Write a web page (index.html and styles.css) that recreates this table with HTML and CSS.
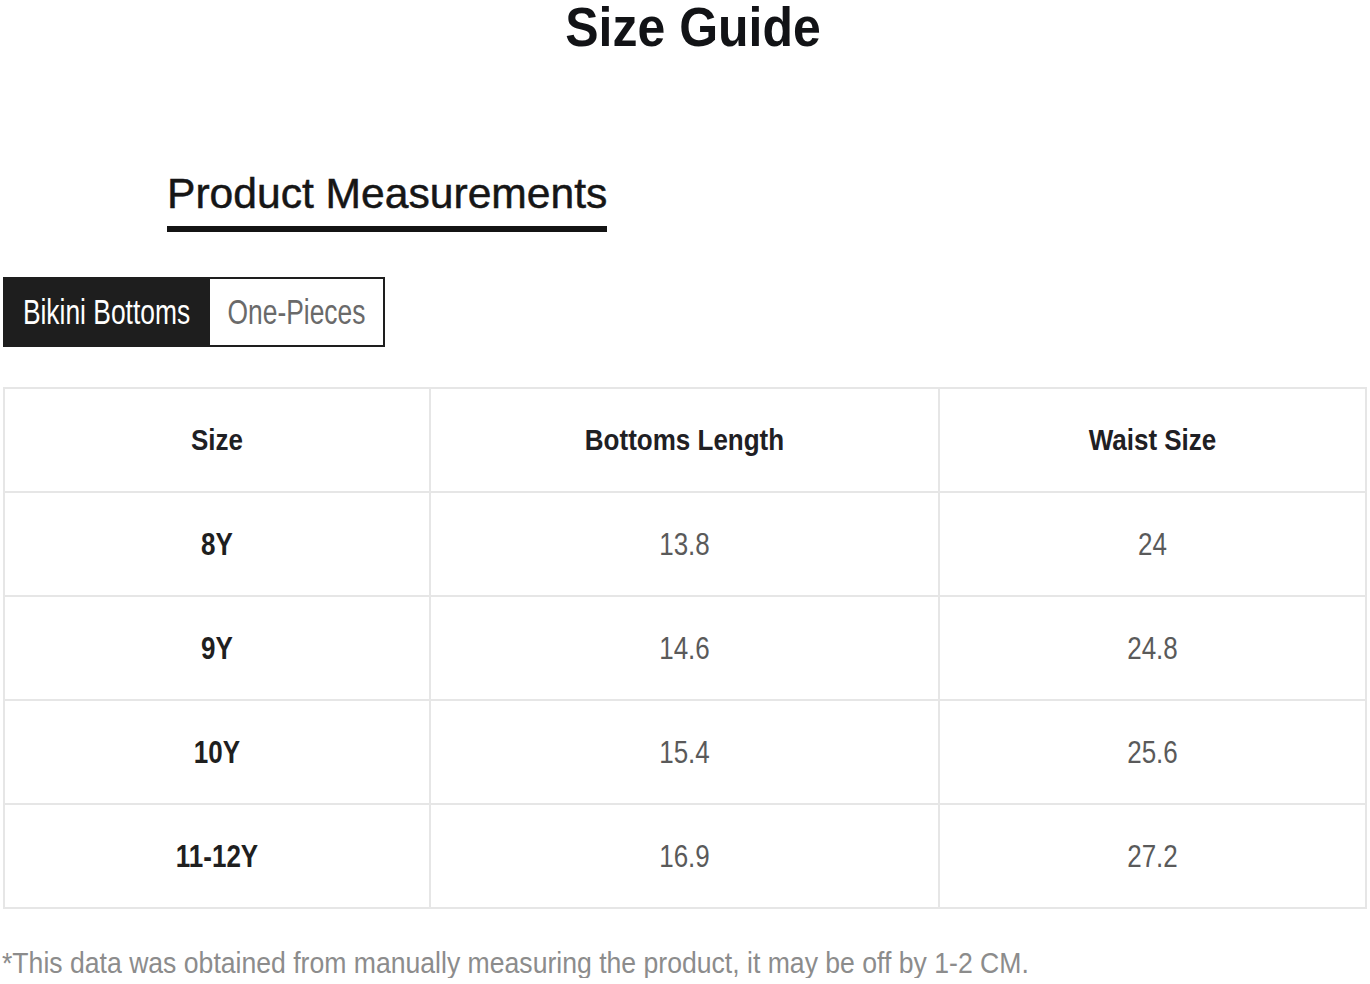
FILE: index.html
```html
<!DOCTYPE html>
<html lang="en">
<head>
<meta charset="utf-8">
<title>Size Guide</title>
<link rel="stylesheet" href="styles.css">
</head>
<body>
<div class="page">
  <h1 class="title"><span class="stretch s-title">Size Guide</span></h1>

  <div class="heading-wrap">
    <h2 class="heading">Product Measurements</h2>
  </div>

  <div class="tabs">
    <div class="tab tab-active"><span class="stretch s-tab">Bikini Bottoms</span></div>
    <div class="tab"><span class="stretch s-tab">One-Pieces</span></div>
  </div>

  <table class="sizes">
    <colgroup>
      <col class="c1">
      <col class="c2">
      <col class="c3">
    </colgroup>
    <thead>
      <tr>
        <th><span class="stretch s-head">Size</span></th>
        <th><span class="stretch s-head">Bottoms Length</span></th>
        <th><span class="stretch s-head">Waist Size</span></th>
      </tr>
    </thead>
    <tbody>
      <tr>
        <td class="size"><span class="stretch s-cell">8Y</span></td>
        <td><span class="stretch s-cell">13.8</span></td>
        <td><span class="stretch s-cell">24</span></td>
      </tr>
      <tr>
        <td class="size"><span class="stretch s-cell">9Y</span></td>
        <td><span class="stretch s-cell">14.6</span></td>
        <td><span class="stretch s-cell">24.8</span></td>
      </tr>
      <tr>
        <td class="size"><span class="stretch s-cell">10Y</span></td>
        <td><span class="stretch s-cell">15.4</span></td>
        <td><span class="stretch s-cell">25.6</span></td>
      </tr>
      <tr>
        <td class="size"><span class="stretch s-cell">11-12Y</span></td>
        <td><span class="stretch s-cell">16.9</span></td>
        <td><span class="stretch s-cell">27.2</span></td>
      </tr>
    </tbody>
  </table>

  <p class="note"><span class="stretch s-note">*This data was obtained from manually measuring the product, it may be off by 1-2 CM.</span></p>
</div>
</body>
</html>
```

FILE: styles.css
```css
html, body {
  margin: 0;
  padding: 0;
  background: #ffffff;
}

body {
  font-family: "Liberation Sans", Arial, sans-serif;
  color: #222222;
}

.page {
  width: 1370px;
  display: flex;
  flex-direction: column;
}

.stretch {
  display: inline-block;
  transform-origin: 50% 50%;
}

.s-title { transform: scaleY(1.1); }
.s-tab   { transform: scaleY(1.3); }
.s-head  { transform: scaleY(1.15); }
.s-cell  { transform: scaleY(1.22); }
.s-note  { transform: scaleY(1.09); transform-origin: 0 50%; }

.title {
  margin: 0;
  padding: 2px 0 0 16px;
  text-align: center;
  font-size: 50px;
  line-height: 50px;
  font-weight: 700;
  color: #121316;
}

.heading-wrap {
  margin-top: 120px;
  padding-left: 167px;
  display: flex;
}

.heading {
  margin: 0;
  font-size: 42.6px;
  line-height: 42px;
  font-weight: 400;
  color: #161616;
  padding-bottom: 12px;
  border-bottom: 6px solid #141414;
  -webkit-text-stroke: 0.5px #161616;
}

.tabs {
  margin-top: 45px;
  margin-left: 3px;
  display: flex;
  align-self: flex-start;
}

.tab {
  box-sizing: border-box;
  height: 70px;
  border: 2px solid #1e1e1e;
  display: flex;
  align-items: center;
  justify-content: center;
  font-size: 26.4px;
  color: #6a6a6a;
  background: #ffffff;
}

.tab:first-child {
  width: 207px;
}

.tab:last-child {
  width: 175px;
  border-left-width: 0;
}

.tab-active {
  background: #1e1e1e;
  color: #ffffff;
}

.sizes {
  margin-top: 40px;
  margin-left: 3px;
  width: 1362px;
  table-layout: fixed;
  border-collapse: collapse;
  border: 2px solid #e6e6e6;
}

.c1 { width: 426px; }
.c2 { width: 509px; }
.c3 { width: 427px; }

.sizes th,
.sizes td {
  border: 2px solid #e6e6e6;
  height: 102px;
  padding: 0;
  text-align: center;
  vertical-align: middle;
  font-size: 26px;
  line-height: 30px;
}

.sizes th {
  font-weight: 700;
  color: #1f2024;
}

.sizes td {
  font-weight: 400;
  color: #5a5a5a;
}

.sizes td.size {
  font-weight: 700;
  color: #1f1f1f;
}

.note {
  margin: 39px 0 0 2px;
  font-size: 26.6px;
  line-height: 30px;
  color: #8c8c8c;
}
```
